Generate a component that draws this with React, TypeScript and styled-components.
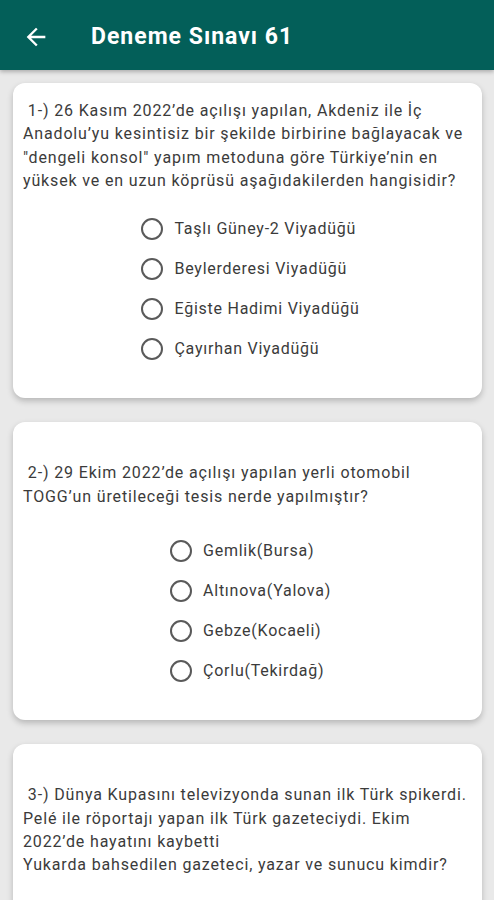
import React from 'react'
import { styled, createGlobalStyle } from 'styled-components';

type Question = {
    id: number;
    text: string;
    space: number;
    options: string[];
}

const questions: Question[] = [
    {
        id: 1,
        text: " 1-) 26 Kasım 2022’de açılışı yapılan, Akdeniz ile İç\nAnadolu’yu kesintisiz bir şekilde birbirine bağlayacak ve\n\"dengeli konsol\" yapım metoduna göre Türkiye’nin en\nyüksek ve en uzun köprüsü aşağıdakilerden hangisidir?",
        space: 17,
        options: ['Taşlı Güney-2 Viyadüğü', 'Beylerderesi Viyadüğü', 'Eğiste Hadimi Viyadüğü', 'Çayırhan Viyadüğü'],
    },
    {
        id: 2,
        text: "\n 2-) 29 Ekim 2022’de açılışı yapılan yerli otomobil\nTOGG’un üretileceği tesis nerde yapılmıştır?",
        space: 23,
        options: ['Gemlik(Bursa)', 'Altınova(Yalova)', 'Gebze(Kocaeli)', 'Çorlu(Tekirdağ)'],
    },
    {
        id: 3,
        text: "\n 3-) Dünya Kupasını televizyonda sunan ilk Türk spikerdi.\nPelé ile röportajı yapan ilk Türk gazeteciydi. Ekim\n2022’de hayatını kaybetti\nYukarda bahsedilen gazeteci, yazar ve sunucu kimdir?",
        space: 23,
        options: ['Atilla Dorsay', 'Halit Kıvanç', 'Orhan Boran', 'Ümit Aktan'],
    },
]

const App = () => {
    return (
        <>
            <GlobalStyle />
            <Screen>
                <TopBar>
                    <BackButton aria-label="geri">
                        <svg width="28" height="28" viewBox="0 0 24 24">
                            <path d="M20 11H7.83l5.59-5.59L12 4l-8 8 8 8 1.41-1.41L7.83 13H20v-2z" fill="#fff" />
                        </svg>
                    </BackButton>
                    <Title>Deneme Sınavı 61</Title>
                </TopBar>
                <List>
                    {
                        questions.map(q => (
                            <Card key={q.id}>
                                <QuestionText $space={q.space}>{q.text}</QuestionText>
                                <OptionGroup>
                                    {
                                        q.options.map(opt => (
                                            <Option key={opt}>
                                                <Radio />
                                                <OptionLabel>{opt}</OptionLabel>
                                            </Option>
                                        ))
                                    }
                                </OptionGroup>
                            </Card>
                        ))
                    }
                </List>
            </Screen>
        </>
    )
};

const GlobalStyle = createGlobalStyle`
    html, body {
        margin: 0;
        padding: 0;
        background: #e9e9e9;
        font-family: Roboto, "Noto Sans", sans-serif;
    }
`

const Screen = styled.div`
    width: 494px;
    height: 900px;
    overflow: hidden;
    background: #e9e9e9;
`

const TopBar = styled.header`
    height: 70px;
    background: #035f59;
    display: flex;
    align-items: center;
    box-shadow: 0 2px 4px rgba(0, 0, 0, 0.25);
    position: relative;
    z-index: 1;
`

const BackButton = styled.div`
    width: 28px;
    height: 28px;
    margin-left: 22px;
    margin-top: 4px;
    display: flex;
    align-items: center;
    justify-content: center;
`

const Title = styled.h1`
    margin: 2px 0 0 41px;
    color: #fff;
    font-size: 23px;
    font-weight: 700;
    letter-spacing: 1px;
`

const List = styled.main`
    display: flex;
    flex-direction: column;
    gap: 24px;
    padding: 13px 12px 0 13px;
`

const Card = styled.section`
    background: #fff;
    border-radius: 12px;
    box-shadow: 0 3px 6px rgba(0, 0, 0, 0.22);
    padding: 16px 8px 29px 8px;
    display: flex;
    flex-direction: column;
    align-items: center;
`

const QuestionText = styled.p<{ $space: number }>`
    align-self: stretch;
    margin: 0 0 ${p => p.$space}px 2px;
    white-space: pre-wrap;
    color: #3b3b3b;
    font-size: 16px;
    line-height: 23.3px;
    letter-spacing: 0.85px;
`

const OptionGroup = styled.div`
    display: flex;
    flex-direction: column;
    align-items: flex-start;
    padding-left: 6px;
`

const Option = styled.label`
    height: 40px;
    display: flex;
    align-items: center;
    gap: 11px;
    color: #3b3b3b;
    font-size: 16px;
    letter-spacing: 0.75px;
`

const Radio = styled.span`
    width: 18px;
    height: 18px;
    border: 2px solid #5a5a5a;
    border-radius: 50%;
`

const OptionLabel = styled.span`
    line-height: 20px;
`

export default App;
